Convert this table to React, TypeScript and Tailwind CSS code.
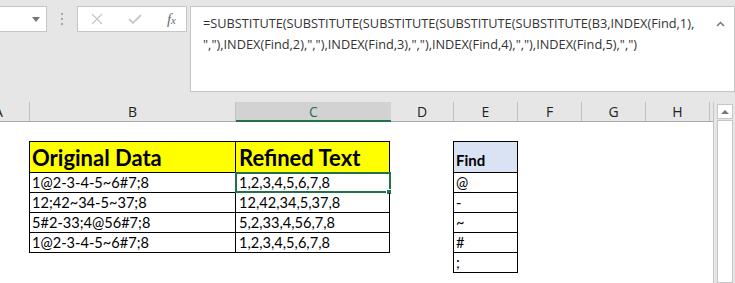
const cols = [
  { name: "D", w: "w-[63px]" },
  { name: "E", w: "w-[64px]" },
  { name: "F", w: "w-[64px]" },
  { name: "G", w: "w-[64px]" },
  { name: "H", w: "w-[64px]" },
];

const rows = [
  ["1@2-3-4-5~6#7;8", "1,2,3,4,5,6,7,8"],
  ["12;42~34-5~37;8", "12,42,34,5,37,8"],
  ["5#2-33;4@56#7;8", "5,2,33,4,56,7,8"],
  ["1@2-3-4-5~6#7;8", "1,2,3,4,5,6,7,8"],
];

const finds = ["@", "-", "~", "#", ";"];

const cell = "font-['Lato',sans-serif] text-[14.6px] text-black";

const App = () => {
  return (
    <div className="w-[735px] h-[283px] bg-[#e6e6e6] overflow-hidden flex flex-col">
      {/* formula bar */}
      <div className="h-[102px] flex items-start pt-[6px]">
        <div className="w-[47px] h-[26px] bg-white border border-l-0 border-[#c6c6c6] flex items-center justify-end pr-[6px]">
          <div className="w-0 h-0 border-l-[4px] border-r-[4px] border-t-[5px] border-l-transparent border-r-transparent border-t-[#777]" />
        </div>
        <div className="w-[30px] h-[26px] flex flex-col items-center justify-center gap-[3px]">
          <div className="w-[2px] h-[2px] bg-[#a8a8a8]" />
          <div className="w-[2px] h-[2px] bg-[#a8a8a8]" />
          <div className="w-[2px] h-[2px] bg-[#a8a8a8]" />
        </div>
        <div className="w-[110px] h-[26px] bg-white border border-[#c6c6c6] flex items-center justify-between pl-[13px] pr-[10px]">
          <svg width="12" height="12" viewBox="0 0 12 12">
            <path d="M1 1 L11 11 M11 1 L1 11" stroke="#c8c8c8" strokeWidth="1.3" />
          </svg>
          <svg width="14" height="12" viewBox="0 0 14 12">
            <path d="M1 6 L5 10 L13 2" stroke="#c8c8c8" strokeWidth="1.8" fill="none" />
          </svg>
          <span className="font-['Liberation_Serif',serif] italic text-[15px] text-[#6a6a6a] leading-none">
            f<span className="text-[11px]">x</span>
          </span>
        </div>
        <div className="ml-[3px] flex-1 h-[86px] bg-white border border-[#c6c6c6] relative pl-[12px] pt-[6px] font-['Open_Sans',sans-serif] text-[12.75px] leading-[21px] text-[#333]">
          <div className="whitespace-nowrap">
            =SUBSTITUTE(SUBSTITUTE(SUBSTITUTE(SUBSTITUTE(SUBSTITUTE(B3,INDEX(Find,1),
          </div>
          <div className="whitespace-nowrap">
            ","),INDEX(Find,2),","),INDEX(Find,3),","),INDEX(Find,4),","),INDEX(Find,5),",")
          </div>
          <svg className="absolute right-[9px] top-[14px]" width="9" height="6" viewBox="0 0 9 6">
            <path d="M1 5 L4.5 1.5 L8 5" stroke="#777" strokeWidth="1.5" fill="none" />
          </svg>
        </div>
      </div>

      <div className="flex flex-1">
        {/* sheet */}
        <div className="w-[714px] flex flex-col border-r border-[#c6c6c6]">
          <div className="h-[20px] flex border-b border-[#ababab] font-['Open_Sans',sans-serif] text-[14px] text-[#222]">
            <div className="w-[30px] border-r border-[#c0c0c0] flex items-center justify-start -indent-[6px] overflow-hidden">
              A
            </div>
            <div className="w-[206px] border-r border-[#c0c0c0] flex items-center justify-center">B</div>
            <div className="w-[155px] bg-[#d2d2d2] text-[#217346] border-b-2 border-[#217346] flex items-center justify-center -mb-px">
              C
            </div>
            {cols.map((c) => (
              <div key={c.name} className={`${c.w} border-r border-[#c0c0c0] flex items-center justify-center`}>
                {c.name}
              </div>
            ))}
          </div>

          <div className="flex-1 bg-white pt-[19px] flex items-start">
            <div className="w-[29px]" />
            <div className="grid grid-cols-[206px_154px] border-l border-t border-black">
              <div className="h-[31px] bg-[#ffff00] border-r border-b border-black flex items-end pl-[2px] pb-[1px] font-['Lato',sans-serif] font-bold text-[22px] leading-[26px]">
                Original Data
              </div>
              <div className="h-[31px] bg-[#ffff00] border-r border-b border-black flex items-end pl-[3px] pb-[1px] font-['Lato',sans-serif] font-bold text-[22px] leading-[26px]">
                Refined Text
              </div>
              {rows.map((r, i) => (
                <div key={i} className="contents">
                  <div className={`h-[20px] border-r border-b border-black flex items-end pl-[2px] leading-[19px] ${cell}`}>
                    {r[0]}
                  </div>
                  <div className={`h-[20px] border-r border-b border-black flex items-end pl-[3px] leading-[19px] relative ${cell}`}>
                    {r[1]}
                    {i === 0 && (
                      <>
                        <div className="absolute -left-px -top-px w-[156px] h-[21px] border-2 border-[#217346]" />
                        <div className="absolute -right-[3px] -bottom-[3px] w-[6px] h-[6px] bg-[#217346] border border-white" />
                      </>
                    )}
                  </div>
                </div>
              ))}
            </div>
            <div className="w-[63px]" />
            <div className="w-[65px] border-l border-t border-black">
              <div className="h-[31px] bg-[#dae3f3] border-r border-b border-black flex items-end pl-[2px] pb-[1px] font-['Lato',sans-serif] font-bold text-[15px]">
                Find
              </div>
              {finds.map((f, i) => (
                <div key={i} className={`h-[20px] border-r border-b border-black flex items-end pl-[2px] leading-[19px] ${cell}`}>
                  {f}
                </div>
              ))}
            </div>
          </div>
        </div>

        {/* scrollbar */}
        <div className="flex-1 flex flex-col items-center pt-[2px]">
          <div className="w-[16px] h-[15px] bg-white border border-[#c6c6c6] flex items-center justify-center">
            <div className="w-0 h-0 border-l-[4px] border-r-[4px] border-b-[4px] border-l-transparent border-r-transparent border-b-[#777]" />
          </div>
          <div className="w-[16px] flex-1 bg-white border border-[#c6c6c6] mt-[1px]" />
        </div>
      </div>
    </div>
  );
};

export default App;
